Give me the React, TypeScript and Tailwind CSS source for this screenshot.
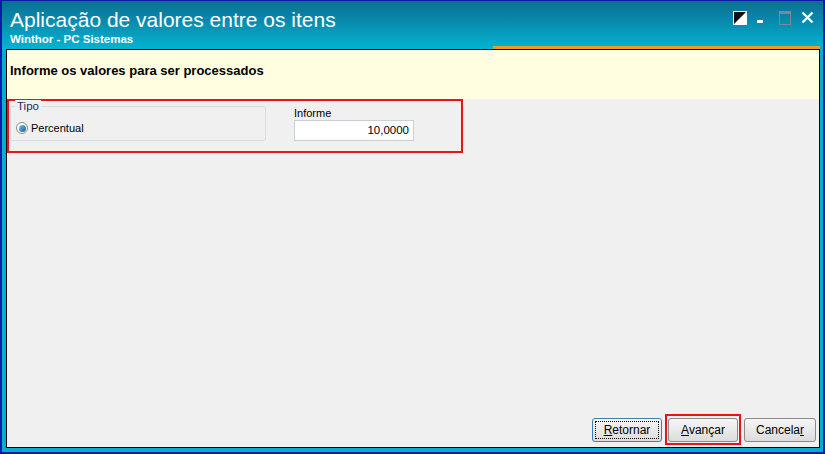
import React from "react";

const font = { fontFamily: '"Liberation Sans", Arial, sans-serif' };

function WinButton({ hot, rest, focused, marked }: { hot: string; rest: string; focused?: boolean; marked?: boolean }) {
  const inner = (
    <button
      className={
        "w-[70px] h-[24px] rounded-[3px] border text-[12px] text-black bg-gradient-to-b from-[#f6f6f6] to-[#dcdcdc] " +
        (focused ? "border-[#3c7fb1] outline outline-1 outline-dotted outline-offset-[-4px] outline-black" : "border-[#8a8a8a]")
      }
    >
      <span className="underline">{hot}</span>
      {rest}
    </button>
  );
  if (marked) return <div className="border-2 border-[#e8141a] p-px">{inner}</div>;
  return inner;
}

export default function App() {
  return (
    <div style={font} className="w-[825px] h-[454px] border-2 border-t border-[#0b1ba5] bg-[#06aecb] flex flex-col">
      {/* title bar */}
      <div className="relative h-[48px] bg-gradient-to-b from-[#0a6f93] via-[#0890b2] to-[#02b4d2] px-[8px] text-white">
        <div className="pt-[6px] text-[21px] leading-[26px]">Aplicação de valores entre os itens</div>
        <div className="text-[11.5px] font-bold leading-[13px]">Winthor - PC Sistemas</div>
        <svg width="14" height="14" viewBox="0 0 14 14" className="absolute left-[731px] top-[10px]">
          <rect x="0.5" y="0.5" width="13" height="13" fill="#fff" stroke="#fff" />
          <path d="M1 1 H13 L1 13 Z" fill="#111" />
        </svg>
        <div className="absolute left-[755px] top-[19px] w-[6px] h-[3px] bg-white" />
        <svg width="12" height="14" viewBox="0 0 12 14" className="absolute left-[777px] top-[10px]">
          <rect x="0.5" y="0.5" width="11" height="13" fill="none" stroke="#7a8a90" />
          <rect x="0" y="0" width="12" height="3" fill="#7a8a90" />
        </svg>
        <svg width="13" height="13" viewBox="0 0 13 13" className="absolute left-[799px] top-[10px]">
          <path d="M1.5 1.5 L11.5 11.5 M11.5 1.5 L1.5 11.5" stroke="#fff" strokeWidth="2.4" />
        </svg>
        <div className="absolute left-[491px] right-[3px] bottom-0 h-[3px] bg-[#f29a1f]" />
      </div>

      {/* content */}
      <div className="flex-1 ml-[4px] mr-[3px] mb-[4px] border border-black bg-[#f0f0f0] flex flex-col">
        <div className="h-[49px] bg-[#fffee1] px-[3px] pt-[11px] text-[13px] font-bold text-black">
          Informe os valores para ser processados
        </div>

        <div className="flex-1 flex flex-col">
          <div className="w-[456px] h-[54px] border-2 border-[#e8141a] flex">
            <div className="relative ml-px mt-[5px] w-[256px] h-[35px] border border-[#d5dfe5] rounded-[3px]">
              <span className="absolute left-[4px] top-[-7px] bg-[#f0f0f0] px-[2px] text-[11.5px] leading-[12px] text-[#1a2a6a]">Tipo</span>
              <div className="flex items-center gap-[3px] pl-[5px] pt-[13px]">
                <span className="w-[12px] h-[12px] rounded-full border border-[#8a8a8a] bg-white flex items-center justify-center">
                  <span className="w-[7px] h-[7px] rounded-full bg-gradient-to-br from-[#6fc2f0] to-[#0f5fa0]" />
                </span>
                <span className="text-[11px] text-black">Percentual</span>
              </div>
            </div>
            <div className="ml-[28px] mt-[5px] flex flex-col">
              <span className="text-[11px] leading-[14px] text-black">Informe</span>
              <div className="w-[120px] h-[21px] border border-[#c9d0d6] bg-white text-right pr-[4px] text-[11.5px] leading-[19px] text-black">
                10,0000
              </div>
            </div>
          </div>

          <div className="mt-auto flex justify-end items-center gap-[3px] pr-[3px] pb-[2px]">
            <WinButton hot="R" rest="etornar" focused />
            <WinButton hot="A" rest="vançar" marked />
            <button className="w-[72px] h-[24px] rounded-[3px] border border-[#8a8a8a] bg-gradient-to-b from-[#f6f6f6] to-[#dcdcdc] text-[12px] text-black">
              Cancela<span className="underline">r</span>
            </button>
          </div>
        </div>
      </div>
    </div>
  );
}
